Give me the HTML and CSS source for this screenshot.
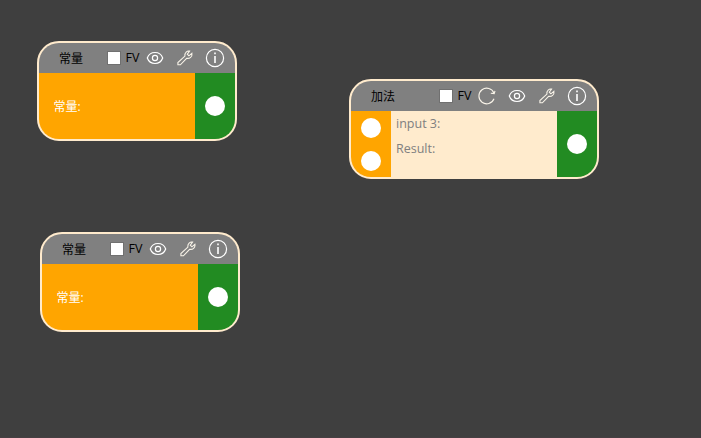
FILE: index.html
```html
<!DOCTYPE html>
<html lang="zh-CN">
<head>
<meta charset="utf-8">
<title>Node editor</title>
<link rel="stylesheet" href="styles.css">
</head>
<body>
<svg class="defs" aria-hidden="true">
  <symbol id="eye" viewBox="0 0 20 20">
    <path d="M2.3 10C3.6 6.4 6.6 4.5 10 4.5S16.4 6.4 17.7 10C16.4 13.6 13.4 15.5 10 15.5S3.6 13.6 2.3 10Z"/>
    <circle cx="10" cy="10" r="2.6"/>
  </symbol>
  <symbol id="wrench" viewBox="0 0 20 20">
    <path d="M14.6 3.1C12.2 2.4 9.4 4.6 9.9 8.1L2.9 14.5V16.8H5.4L11.6 10.3C14.6 10.9 17.5 8.9 16.9 5.3L13.9 7.8L12.3 6.2L14.6 3.1Z"/>
  </symbol>
  <symbol id="info" viewBox="0 0 20 20">
    <circle cx="10" cy="10" r="8.6"/>
    <path class="stem" d="M10 8V15M10 4.6V6.3"/>
  </symbol>
  <symbol id="refresh" viewBox="0 0 20 20">
    <path d="M17 7.2A7.8 7.8 0 1 0 17 12.8M18 4.8L17.2 7.6L13.8 7.2"/>
  </symbol>
</svg>
<main class="canvas">
  <section class="node node-a">
    <header class="head">
      <h2 class="title">常量</h2>
      <label class="flag"><span class="box"></span>FV</label>
      <svg class="icon"><use href="#eye"/></svg>
      <svg class="icon thin"><use href="#wrench"/></svg>
      <svg class="icon"><use href="#info"/></svg>
    </header>
    <div class="body">
      <div class="constant">常量:</div>
      <div class="ports out"><i class="port"></i></div>
    </div>
  </section>
  <section class="node wide node-b">
    <header class="head">
      <h2 class="title">加法</h2>
      <label class="flag"><span class="box"></span>FV</label>
      <svg class="icon thin"><use href="#refresh"/></svg>
      <svg class="icon"><use href="#eye"/></svg>
      <svg class="icon thin"><use href="#wrench"/></svg>
      <svg class="icon"><use href="#info"/></svg>
    </header>
    <div class="body">
      <div class="ports in"><i class="port"></i><i class="port"></i></div>
      <div class="details"><p>input 3:</p><p>Result:</p></div>
      <div class="ports out"><i class="port"></i></div>
    </div>
  </section>
  <section class="node node-c">
    <header class="head">
      <h2 class="title">常量</h2>
      <label class="flag"><span class="box"></span>FV</label>
      <svg class="icon"><use href="#eye"/></svg>
      <svg class="icon thin"><use href="#wrench"/></svg>
      <svg class="icon"><use href="#info"/></svg>
    </header>
    <div class="body">
      <div class="constant">常量:</div>
      <div class="ports out"><i class="port"></i></div>
    </div>
  </section>
</main>
</body>
</html>
```
FILE: styles.css
```css
* { box-sizing: border-box; }
body {
  margin: 0;
  background: #3f3f3f;
  font: 12px/16px "Open Sans", "Noto Sans CJK SC", sans-serif;
}
.defs { position: absolute; width: 0; height: 0; }
.canvas { position: relative; height: 438px; overflow: hidden; border-bottom: 1px solid #463f42; }
.node {
  position: absolute;
  width: 200px;
  height: 100px;
  border: 2px solid #ffebcd;
  border-radius: 22px;
  background: #ffebcd;
  overflow: hidden;
}
.node.wide { width: 250px; }
.node-a { left: 37px; top: 41px; }
.node-b { left: 349px; top: 79px; }
.node-c { left: 40px; top: 232px; }
.head {
  display: flex;
  align-items: center;
  gap: 10px;
  height: 30px;
  padding: 0 10px 0 20px;
  background: #808080;
  color: #000;
}
.title { margin: 0 auto 0 0; padding-top: 2px; font: inherit; }
.flag { display: flex; align-items: center; gap: 4.5px; width: 38px; margin-right: -10px; font-size: 12.5px; }
.box { flex: none; width: 14px; height: 14px; background: #fff; border: 1px solid #707070; }
.icon { flex: none; width: 20px; height: 20px; fill: none; stroke: #fff; stroke-width: 1.2; }
.icon.thin { stroke: #f8f3e8; stroke-width: 1.1; }
.stem { stroke-width: 1.6; }
.body { display: flex; height: 66px; }
.constant {
  flex: 1;
  display: flex;
  align-items: center;
  padding: 2px 0 0 14.5px;
  background: #ffa500;
  color: #fff;
}
.ports {
  flex: none;
  width: 40px;
  display: flex;
  flex-direction: column;
  align-items: center;
  justify-content: space-around;
}
.in { background: #ffa500; }
.out { background: #228b22; }
.port { width: 20px; height: 20px; border-radius: 50%; background: #fff; }
.details { flex: 1; padding: 5px; color: #808080; font-size: 12.5px; }
.details p { margin: 0 0 9px; }
```
